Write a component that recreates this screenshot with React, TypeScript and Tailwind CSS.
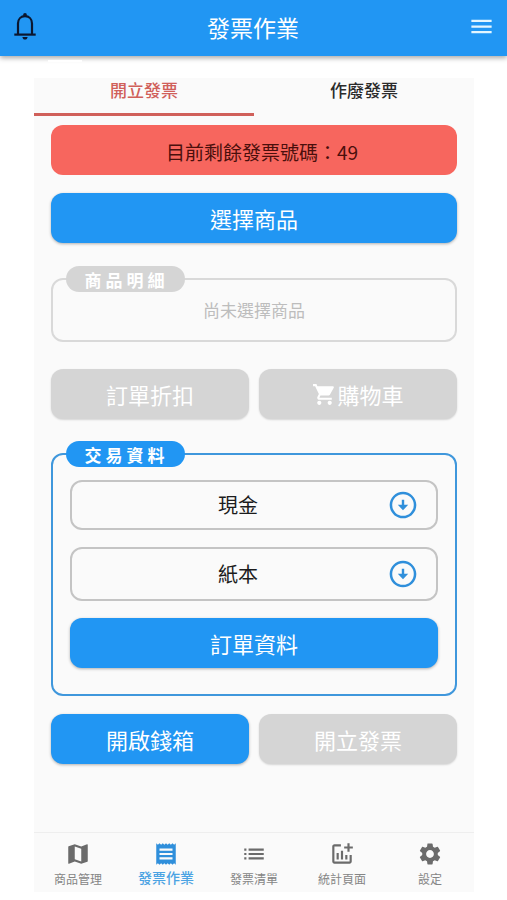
import { useState } from "react";
import type { ReactNode } from "react";
import {
  MdAddchart,
  MdList,
  MdMap,
  MdMenu,
  MdReceipt,
  MdSettings,
  MdShoppingCart,
} from "react-icons/md";

/* =========================
   1. 類型與資料
   ========================= */

type SelectFieldProps = {
  label: string;
  options: string[];
  className: string;
};

type ActionButtonProps = {
  children: ReactNode;
  disabled?: boolean;
};

const tabs = ["開立發票", "作廢發票"];

const navItems = [
  { label: "商品管理", icon: MdMap },
  { label: "發票作業", icon: MdReceipt },
  { label: "發票清單", icon: MdList },
  { label: "統計頁面", icon: MdAddchart },
  { label: "設定", icon: MdSettings },
];

/* =========================
   2. 圖示
   ========================= */

function BellIcon() {
  return (
    <svg width="22" height="27" viewBox="0 0 22 27" fill="none" aria-hidden="true">
      <path
        d="M4 21.5V10.5C4 6 7 3.2 11 3.2S18 6 18 10.5V21.5"
        stroke="currentColor"
        strokeWidth="2.2"
      />
      <path d="M0.3 21.6H21.7" stroke="currentColor" strokeWidth="2.2" />
      <circle cx="11" cy="2" r="1.9" fill="currentColor" />
      <path d="M8.4 23.9H13.6C13.4 25.5 12.4 26.6 11 26.6S8.6 25.5 8.4 23.9Z" fill="currentColor" />
    </svg>
  );
}

function ArrowCircleIcon() {
  return (
    <svg width="32" height="32" viewBox="0 0 24 24" fill="currentColor" aria-hidden="true">
      <path d="M12 3.9a8.1 8.1 0 1 1 0 16.2 8.1 8.1 0 0 1 0-16.2m0-1.9C6.48 2 2 6.48 2 12s4.48 10 10 10 10-4.48 10-10S17.52 2 12 2z" />
      <path d="M11.1 11.8V8h1.8v3.8h3L12 16l-3.9-4.2z" />
    </svg>
  );
}

/* =========================
   3. 共用元件
   ========================= */

function ActionButton({ children, disabled = false }: ActionButtonProps) {
  return (
    <button
      type="button"
      disabled={disabled}
      className="flex h-[50px] w-full items-center justify-center rounded-xl bg-[#2196f3] text-[22px] text-white shadow-[0_1px_3px_rgba(0,0,0,0.3)] disabled:bg-[#d5d5d5] disabled:shadow-[0_1px_2px_rgba(0,0,0,0.15)]"
    >
      {children}
    </button>
  );
}

function SelectField({ label, options, className }: SelectFieldProps) {
  return (
    <div className="relative">
      <select
        aria-label={label}
        className={`w-full appearance-none rounded-xl border-2 border-[#c4c4c4] bg-transparent pr-8 text-center text-xl leading-10 text-[#1c1c1c] outline-none [text-align-last:center] ${className}`}
      >
        {options.map((option) => (
          <option key={option}>{option}</option>
        ))}
      </select>
      <span className="pointer-events-none absolute inset-y-0 right-[19px] flex items-center text-[#2f8fdb]">
        <ArrowCircleIcon />
      </span>
    </div>
  );
}

/* =========================
   4. 頁面主體
   ========================= */

export default function App() {
  const [activeTab, setActiveTab] = useState("開立發票");

  return (
    <div className="flex min-h-screen flex-col bg-white font-['Noto_Sans_CJK_TC',sans-serif]">
      <header className="relative flex h-14 items-center justify-between bg-[#2196f3] pr-3 pl-3.5 shadow-[0_2px_5px_rgba(0,0,0,0.35)]">
        <button type="button" aria-label="通知" className="w-6 pb-1 text-[#0b1730]">
          <BellIcon />
        </button>
        <h1 className="pb-0.5 text-[23px] text-white">發票作業</h1>
        <button type="button" aria-label="選單" className="pb-1 text-[#e3f6ff]">
          <MdMenu size={27} />
        </button>
      </header>

      <div className="relative h-[22px] px-12">
        <div className="mt-1 h-0.5 w-[34px] bg-white" />
      </div>

      <div className="mr-[33px] mb-2 ml-[34px] flex flex-1 flex-col bg-[#fafafa]">
        {/* 分頁切換 */}
        <div role="tablist" className="grid grid-cols-2">
          {tabs.map((tab) => (
            <button
              key={tab}
              type="button"
              role="tab"
              aria-selected={activeTab === tab}
              onClick={() => setActiveTab(tab)}
              className="h-[38px] border-b-3 border-transparent pb-[11px] text-[17px] leading-6 font-medium text-[#2b2b2b] aria-selected:border-[#d0605a] aria-selected:text-[#d0605a]"
            >
              {tab}
            </button>
          ))}
        </div>

        <main className="flex-1 px-[17px] pt-[9px]">
          <p className="flex h-[50px] items-center justify-center rounded-xl bg-[#f7665e] pt-1 pl-4 text-[19px] text-[#4a0f0c]">
            目前剩餘發票號碼：49
          </p>

          <div className="mt-[18px]">
            <ActionButton>選擇商品</ActionButton>
          </div>

          {/* 商品明細 */}
          <section className="relative mt-[35px] flex h-16 items-center justify-center rounded-xl border-2 border-[#d9d9d9]">
            <h2 className="absolute -top-3.5 left-[13px] flex h-[26px] w-[119px] items-center justify-center rounded-full bg-[#d5d5d5] pt-0.5 pl-0.5 text-[17px] font-bold tracking-[4px] text-white">
              商品明細
            </h2>
            <p className="text-[17px] text-[#bdbdbd]">尚未選擇商品</p>
          </section>

          <div className="mt-[27px] grid grid-cols-2 gap-2.5">
            <ActionButton disabled>訂單折扣</ActionButton>
            <ActionButton disabled>
              <MdShoppingCart size={25} />
              購物車
            </ActionButton>
          </div>

          {/* 交易資料 */}
          <section className="relative mt-[34px] rounded-xl border-2 border-[#3f97dc] px-[17px] pt-[25px] pb-[26px]">
            <h2 className="absolute -top-3.5 left-[13px] flex h-[26px] w-[119px] items-center justify-center rounded-full bg-[#2196f3] pt-0.5 pl-0.5 text-[17px] font-bold tracking-[4px] text-white">
              交易資料
            </h2>
            <div className="flex flex-col gap-[17px]">
              <SelectField label="付款方式" options={["現金"]} className="h-[50px]" />
              <SelectField label="發票類型" options={["紙本"]} className="h-[54px]" />
              <ActionButton>訂單資料</ActionButton>
            </div>
          </section>

          <div className="mt-[18px] grid grid-cols-2 gap-2.5">
            <ActionButton>開啟錢箱</ActionButton>
            <ActionButton disabled>開立發票</ActionButton>
          </div>
        </main>

        {/* 底部導覽 */}
        <nav className="grid h-[60px] grid-cols-5 border-t border-[#eeeeee]">
          {navItems.map(({ label, icon: Icon }) => (
            <a
              key={label}
              href="#"
              aria-current={label === "發票作業" ? "page" : undefined}
              className="group flex flex-col items-center pt-2 text-[#6b6b6b] aria-[current=page]:text-[#2f8fdb]"
            >
              <Icon size={26} />
              <span className="pt-0.5 text-xs leading-5 whitespace-nowrap text-[#858585] group-aria-[current=page]:pt-0 group-aria-[current=page]:text-sm group-aria-[current=page]:leading-5 group-aria-[current=page]:font-medium group-aria-[current=page]:text-[#4ba3e3]">
                {label}
              </span>
            </a>
          ))}
        </nav>
      </div>
    </div>
  );
}
